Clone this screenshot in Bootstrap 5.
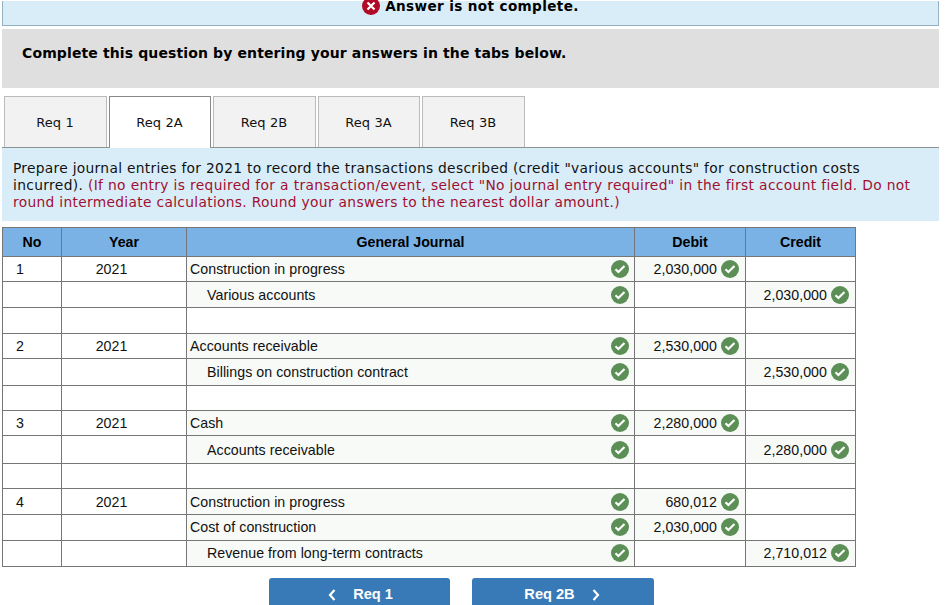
<!DOCTYPE html>
<html lang="en">
<head>
<meta charset="utf-8">
<meta name="viewport" content="width=device-width, initial-scale=1">
<title>Journal entries</title>
<link href="https://cdn.jsdelivr.net/npm/bootstrap@5.3.0/dist/css/bootstrap.min.css" rel="stylesheet">
<style>
body{font-family:"DejaVu Sans",sans-serif;color:#111;height:605px;overflow:hidden;font-size:13px}
.page{width:937px;margin-left:2px}
.status{height:25px;margin-top:1px;background:#d9edf8;border:1px solid #93b3c0;border-top:0;font-size:13.6px;letter-spacing:.36px;line-height:11px}
.status svg{width:18px;height:18px;margin:-4px 5px 0 0}
.prompt{height:59px;margin-top:3px;background:#dfdfdf;padding:14px 20px;font-size:14px;letter-spacing:.12px;line-height:20px}
.prompt span,.status span{white-space:nowrap;color:#000}
.tabs{height:52px;margin-top:8px;padding-left:2px;gap:2px;border-bottom:1px solid #8b9494}
.tabs .nav-link{height:51px;width:103px;padding:1px 1px 0 0;background:#f2f2f2;border:1px solid #bbb;border-bottom:0;border-radius:0;color:#111;font-size:13px;letter-spacing:.1px}
.tabs .nav-link.active{background:#fff;border-color:#888;height:52px;width:102px;padding-top:0}
.tabs .w-a{width:102px}
.intro{height:73px;background:#d9edf8;padding:12px 11px 0;font-size:13.8px;line-height:17px;white-space:nowrap}
.intro .l1{letter-spacing:.292px}
.intro .l2{letter-spacing:.348px}
.intro .l3{letter-spacing:.31px}
.intro .note{color:#a00f30}
.journal{width:854px;margin-top:6px;table-layout:fixed;border-collapse:separate;border-spacing:0;border:solid #767676;border-width:1px 0 0 1px;font:14.2px/16px "Liberation Sans",Arial,sans-serif;color:#111}
.journal th,.journal td{border:solid #767676;border-width:0 1px 1px 0;padding:0;vertical-align:middle;height:26px}
.journal td{letter-spacing:.045px}
.journal th{height:29px;background:#7ab2e6;text-align:center;color:#000}
.journal .h25 td{height:25px}.journal .h27 td{height:27px}.journal .h28 td{height:28px}
.journal .up td{padding-bottom:1px}
.journal td:nth-child(1){padding-left:13px}
.journal td:nth-child(2){text-align:center;padding-right:25px}
.journal .ok{background:#f7faf7}
.c-no{width:59px}.c-year{width:125px}.c-name{width:448px}.c-debit{width:111px}.c-credit{width:110px}
.cellrow{display:flex;align-items:center;height:18px;padding:0 5px 0 3px}
.cellrow svg{width:18px;height:18px;flex:none}
.cellrow.sub{padding-left:20px}
.cellrow.amt{gap:4px;padding-right:6px}
.pager{margin:11px 0 0 267px;gap:22px;font-family:"Liberation Sans",Arial,sans-serif}
.pager .btn{width:181px;height:34px;padding:0 0 0 2px;border:0;border-radius:3px;background:#377ab7;color:#fff;font-size:14.6px;font-weight:700;gap:17px}
.pager .btn+.btn{width:182px;padding:0 2px 0 0}
.pager svg{width:8px;height:12px;fill:none;stroke:#fff;stroke-width:2.2}
</style>
</head>
<body>
<svg class="d-none" aria-hidden="true">
<symbol id="ok" viewBox="0 0 18 18"><circle cx="9" cy="9" r="9" fill="#5b8f56"/><path d="M4.500 9.200l2.900 2.800 6.100-6" fill="none" stroke="#fff" stroke-width="2.200"/></symbol>
</svg>
<div class="page">
<div class="status d-flex justify-content-center fw-bold"><svg viewBox="0 0 18 18"><circle cx="9" cy="9" r="9" fill="#b00a26"/><path d="M5.500 5.500l7 7M12.500 5.500l-7 7" stroke="#fff" stroke-width="2.200"/></svg><span>Answer is not complete.</span></div>
<div class="prompt fw-bold"><span>Complete this question by entering your answers in the tabs below.</span></div>
<nav class="tabs nav">
<a class="nav-link d-flex align-items-center justify-content-center">Req 1</a>
<a class="nav-link active d-flex align-items-center justify-content-center">Req 2A</a>
<a class="nav-link d-flex align-items-center justify-content-center">Req 2B</a>
<a class="nav-link w-a d-flex align-items-center justify-content-center">Req 3A</a>
<a class="nav-link d-flex align-items-center justify-content-center">Req 3B</a>
</nav>
<div class="intro"><span class="l1">Prepare journal entries for 2021 to record the transactions described (credit "various accounts" for construction costs</span><br><span class="l2">incurred). <span class="note">(If no entry is required for a transaction/event, select "No journal entry required" in the first account field. Do not</span></span><br><span class="l3 note">round intermediate calculations. Round your answers to the nearest dollar amount.)</span></div>
<table class="journal">
<colgroup><col class="c-no"><col class="c-year"><col class="c-name"><col class="c-debit"><col class="c-credit"></colgroup>
<thead><tr><th>No</th><th>Year</th><th>General Journal</th><th>Debit</th><th>Credit</th></tr></thead>
<tbody>
<tr class="h25"><td>1</td><td>2021</td><td class="ok"><div class="cellrow justify-content-between">Construction in progress<svg><use href="#ok"/></svg></div></td><td class="ok"><div class="cellrow amt justify-content-end">2,030,000<svg><use href="#ok"/></svg></div></td><td></td></tr>
<tr><td></td><td></td><td class="ok"><div class="cellrow sub justify-content-between">Various accounts<svg><use href="#ok"/></svg></div></td><td></td><td class="ok"><div class="cellrow amt justify-content-end">2,030,000<svg><use href="#ok"/></svg></div></td></tr>
<tr><td></td><td></td><td></td><td></td><td></td></tr>
<tr class="h25"><td>2</td><td>2021</td><td class="ok"><div class="cellrow justify-content-between">Accounts receivable<svg><use href="#ok"/></svg></div></td><td class="ok"><div class="cellrow amt justify-content-end">2,530,000<svg><use href="#ok"/></svg></div></td><td></td></tr>
<tr class="h27"><td></td><td></td><td class="ok"><div class="cellrow sub justify-content-between">Billings on construction contract<svg><use href="#ok"/></svg></div></td><td></td><td class="ok"><div class="cellrow amt justify-content-end">2,530,000<svg><use href="#ok"/></svg></div></td></tr>
<tr class="h25"><td></td><td></td><td></td><td></td><td></td></tr>
<tr class="h25"><td>3</td><td>2021</td><td class="ok"><div class="cellrow justify-content-between">Cash<svg><use href="#ok"/></svg></div></td><td class="ok"><div class="cellrow amt justify-content-end">2,280,000<svg><use href="#ok"/></svg></div></td><td></td></tr>
<tr class="h28"><td></td><td></td><td class="ok"><div class="cellrow sub justify-content-between">Accounts receivable<svg><use href="#ok"/></svg></div></td><td></td><td class="ok"><div class="cellrow amt justify-content-end">2,280,000<svg><use href="#ok"/></svg></div></td></tr>
<tr class="h25"><td></td><td></td><td></td><td></td><td></td></tr>
<tr><td>4</td><td>2021</td><td class="ok"><div class="cellrow justify-content-between">Construction in progress<svg><use href="#ok"/></svg></div></td><td class="ok"><div class="cellrow amt justify-content-end">680,012<svg><use href="#ok"/></svg></div></td><td></td></tr>
<tr class="up"><td></td><td></td><td class="ok"><div class="cellrow justify-content-between">Cost of construction<svg><use href="#ok"/></svg></div></td><td class="ok"><div class="cellrow amt justify-content-end">2,030,000<svg><use href="#ok"/></svg></div></td><td></td></tr>
<tr class="up"><td></td><td></td><td class="ok"><div class="cellrow sub justify-content-between">Revenue from long-term contracts<svg><use href="#ok"/></svg></div></td><td></td><td class="ok"><div class="cellrow amt justify-content-end">2,710,012<svg><use href="#ok"/></svg></div></td></tr>
</tbody>
</table>
<div class="pager d-flex">
<button class="btn d-flex align-items-center justify-content-center"><svg viewBox="0 0 8 12"><path d="M6.500 1L2 6l4.500 5"/></svg>Req 1</button>
<button class="btn d-flex align-items-center justify-content-center">Req 2B<svg viewBox="0 0 8 12"><path d="M1.500 1L6 6l-4.500 5"/></svg></button>
</div>
</div>
<script src="https://cdn.jsdelivr.net/npm/bootstrap@5.3.0/dist/js/bootstrap.bundle.min.js"></script>
</body>
</html>
